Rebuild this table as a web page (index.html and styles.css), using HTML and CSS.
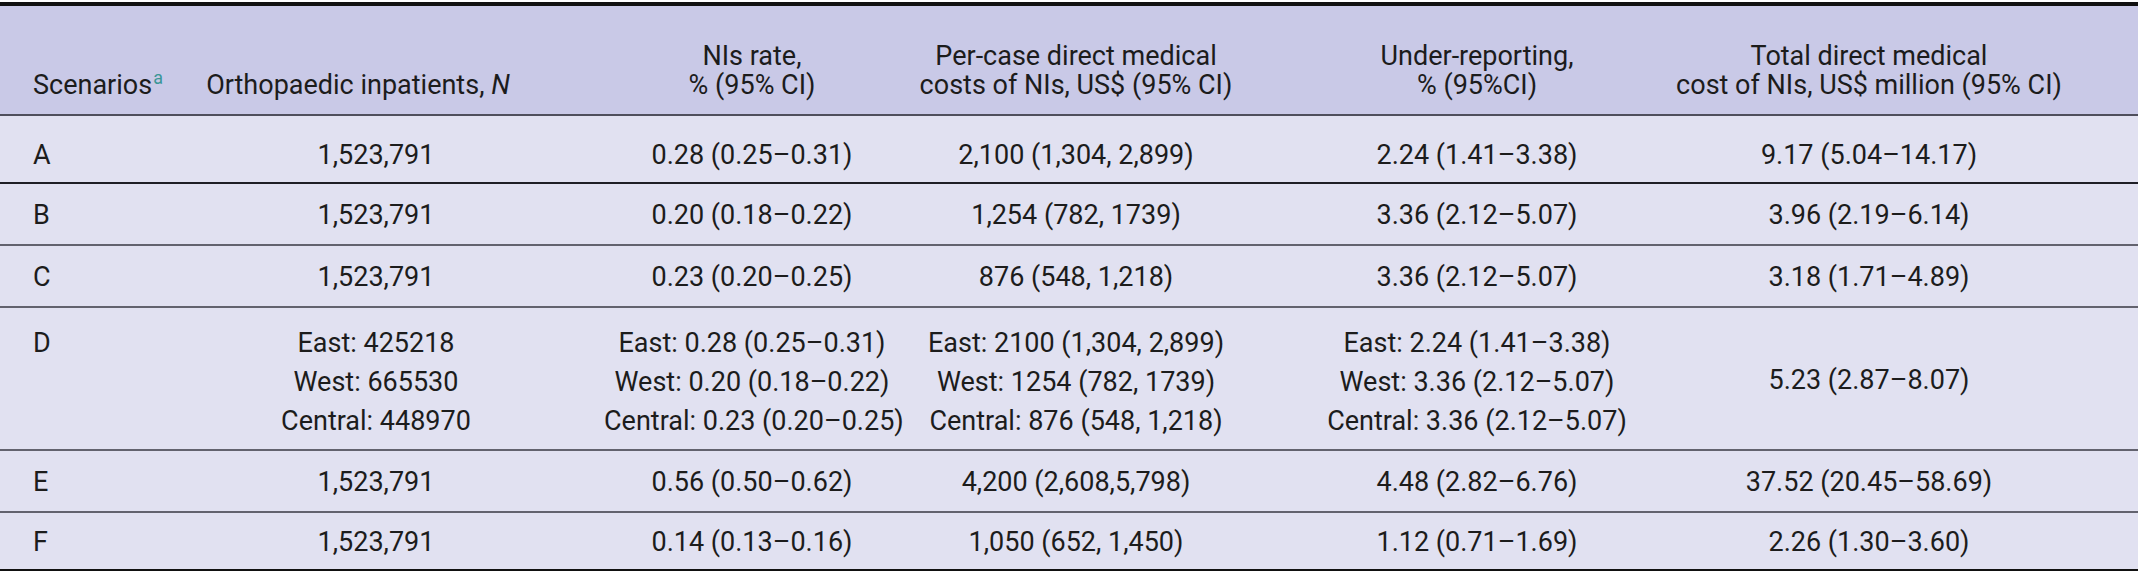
FILE: index.html
```html
<!DOCTYPE html>
<html>
<head>
<meta charset="utf-8">
<link rel="stylesheet" href="styles.css">
</head>
<body>
<div class="wrap">
<table class="tbl">
  <colgroup>
    <col class="c1"><col class="c2"><col class="c3"><col class="c4"><col class="c5"><col class="c6">
  </colgroup>
  <thead>
    <tr>
      <th class="k1">Scenarios<sup class="fn">a</sup></th>
      <th class="k2">Orthopaedic inpatients, <i>N</i></th>
      <th class="k3">NIs rate,<br>% (95% CI)</th>
      <th class="k4">Per-case direct medical<br>costs of NIs, US$ (95% CI)</th>
      <th class="k5">Under-reporting,<br>% (95%CI)</th>
      <th class="k6">Total direct medical<br>cost of NIs, US$ million (95% CI)</th>
    </tr>
  </thead>
  <tbody>
    <tr class="ra">
      <td class="k1">A</td><td class="k2">1,523,791</td><td class="k3">0.28 (0.25–0.31)</td>
      <td class="k4">2,100 (1,304, 2,899)</td><td class="k5">2.24 (1.41–3.38)</td><td class="k6">9.17 (5.04–14.17)</td>
    </tr>
    <tr>
      <td class="k1">B</td><td class="k2">1,523,791</td><td class="k3">0.20 (0.18–0.22)</td>
      <td class="k4">1,254 (782, 1739)</td><td class="k5">3.36 (2.12–5.07)</td><td class="k6">3.96 (2.19–6.14)</td>
    </tr>
    <tr>
      <td class="k1">C</td><td class="k2">1,523,791</td><td class="k3">0.23 (0.20–0.25)</td>
      <td class="k4">876 (548, 1,218)</td><td class="k5">3.36 (2.12–5.07)</td><td class="k6">3.18 (1.71–4.89)</td>
    </tr>
    <tr class="rd">
      <td class="k1 multi">D</td>
      <td class="k2 multi">East: 425218<br>West: 665530<br>Central: 448970</td>
      <td class="k3 multi">East: 0.28 (0.25–0.31)<br>West: 0.20 (0.18–0.22)<br>Central: 0.23 (0.20–0.25)</td>
      <td class="k4 multi">East: 2100 (1,304, 2,899)<br>West: 1254 (782, 1739)<br>Central: 876 (548, 1,218)</td>
      <td class="k5 multi">East: 2.24 (1.41–3.38)<br>West: 3.36 (2.12–5.07)<br>Central: 3.36 (2.12–5.07)</td>
      <td class="k6">5.23 (2.87–8.07)</td>
    </tr>
    <tr>
      <td class="k1">E</td><td class="k2">1,523,791</td><td class="k3">0.56 (0.50–0.62)</td>
      <td class="k4">4,200 (2,608,5,798)</td><td class="k5">4.48 (2.82–6.76)</td><td class="k6">37.52 (20.45–58.69)</td>
    </tr>
    <tr class="rf">
      <td class="k1">F</td><td class="k2">1,523,791</td><td class="k3">0.14 (0.13–0.16)</td>
      <td class="k4">1,050 (652, 1,450)</td><td class="k5">1.12 (0.71–1.69)</td><td class="k6">2.26 (1.30–3.60)</td>
    </tr>
  </tbody>
</table>
</div>
</body>
</html>
```

FILE: styles.css
```css
html, body {
  margin: 0;
  padding: 0;
  background: #ffffff;
}

.wrap {
  padding-top: 2px;
  width: 2138px;
}

.tbl {
  width: 2138px;
  border-collapse: collapse;
  table-layout: fixed;
  font-family: Roboto, "Liberation Sans", sans-serif;
  font-size: 27px;
  color: #1c1c1c;
  border-top: 4px solid #111111;
  border-bottom: 5px solid #111111;
}

.c1 { width: 196px; }
.c2 { width: 360px; }
.c3 { width: 344px; }
.c4 { width: 390px; }
.c5 { width: 350px; }
.c6 { width: 498px; }

th, td {
  padding: 0;
  text-align: center;
  white-space: nowrap;
  font-weight: 400;
  box-sizing: border-box;
}

thead th {
  background: #c9c9e7;
  height: 111px;
  vertical-align: bottom;
  line-height: 29px;
  padding-bottom: 14px;
  border-bottom: 2px solid #4e4e5c;
}

tbody td {
  background: #e1e1f1;
  height: 62px;
  vertical-align: middle;
  line-height: 30px;
  padding-top: 2px;
  border-bottom: 2px solid #62626e;
}

tbody tr.ra td {
  height: 68px;
  padding-top: 12px;
  border-bottom-color: #1e1e26;
}

tbody tr.rf td {
  border-bottom: none;
  height: 59px;
}

tbody tr.rd td {
  height: 143px;
}

tbody tr.rd td.multi {
  vertical-align: top;
  line-height: 39px;
  padding-top: 16px;
}

.k1 {
  text-align: left;
  padding-left: 33px;
}

th.k2 { padding-right: 36px; }
.k3 { padding-left: 48px; }
.k4 { padding-right: 38px; }
.k5 { padding-left: 24px; }
.k6 { padding-right: 40px; }

.fn {
  color: #3a9696;
  font-size: 18px;
  vertical-align: top;
  line-height: 1;
  position: relative;
  top: -2px;
  margin-left: 1px;
}
```
